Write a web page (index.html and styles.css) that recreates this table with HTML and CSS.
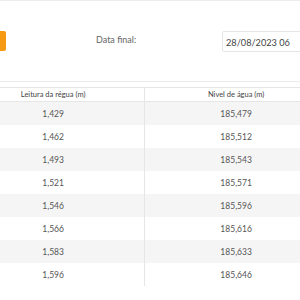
FILE: index.html
```html
<!DOCTYPE html>
<html lang="pt">
<head>
<meta charset="utf-8">
<link rel="stylesheet" href="styles.css">
</head>
<body>
<div class="page">
  <div class="filters">
    <button class="btn" aria-label="Filtrar"></button>
    <label class="label">Data final:</label>
    <div class="input">28/08/2023 06</div>
  </div>
  <table class="grid">
    <thead>
      <tr><th>Leitura da régua (m)</th><th>Nivel de água (m)</th></tr>
    </thead>
    <tbody>
      <tr><td>1,429</td><td>185,479</td></tr>
      <tr><td>1,462</td><td>185,512</td></tr>
      <tr><td>1,493</td><td>185,543</td></tr>
      <tr><td>1,521</td><td>185,571</td></tr>
      <tr><td>1,546</td><td>185,596</td></tr>
      <tr><td>1,566</td><td>185,616</td></tr>
      <tr><td>1,583</td><td>185,633</td></tr>
      <tr><td>1,596</td><td>185,646</td></tr>
    </tbody>
  </table>
</div>
</body>
</html>
```
FILE: styles.css
```css
html, body {
  margin: 0;
  padding: 0;
  background: #fff;
  overflow: hidden;
}
body {
  font-family: Lato, "Liberation Sans", sans-serif;
  color: #555;
}
.page {
  width: 300px;
  height: 300px;
  overflow: hidden;
}
.filters {
  height: 82px;
  border-top: 1px solid #ececec;
  border-bottom: 1px solid #ececec;
  display: flex;
  align-items: flex-start;
  padding-top: 30px;
  box-sizing: border-box;
  margin-bottom: 5px;
}
.btn {
  margin-left: -40px;
  margin-right: 90px;
  width: 46px;
  height: 20px;
  border: none;
  border-radius: 2px;
  background: #f59a12;
  padding: 0;
  flex: none;
}
.label {
  width: 126px;
  margin-top: 3px;
  font-size: 9px;
  color: #666;
  flex: none;
}
.input {
  flex: none;
  width: 120px;
  height: 21px;
  box-sizing: border-box;
  border: 1px solid #e6e6e6;
  border-radius: 2px;
  padding: 5px 0 0 3px;
  font-size: 9.2px;
  color: #444;
  white-space: nowrap;
}
.grid {
  margin-left: -38px;
  width: 366px;
  border-collapse: collapse;
  table-layout: fixed;
}
.grid th, .grid td {
  text-align: center;
  border-right: 1px solid #e6e6e6;
  padding: 0;
}
.grid th {
  height: 13px;
  font-size: 7.5px;
  font-weight: normal;
  color: #444;
  border-top: 1px solid #e6e6e6;
  border-bottom: 1px solid #e6e6e6;
}
.grid td {
  height: 23px;
  font-size: 8.5px;
  color: #555;
}
.grid tbody tr:nth-child(odd) td {
  background: #f5f5f5;
}
```
